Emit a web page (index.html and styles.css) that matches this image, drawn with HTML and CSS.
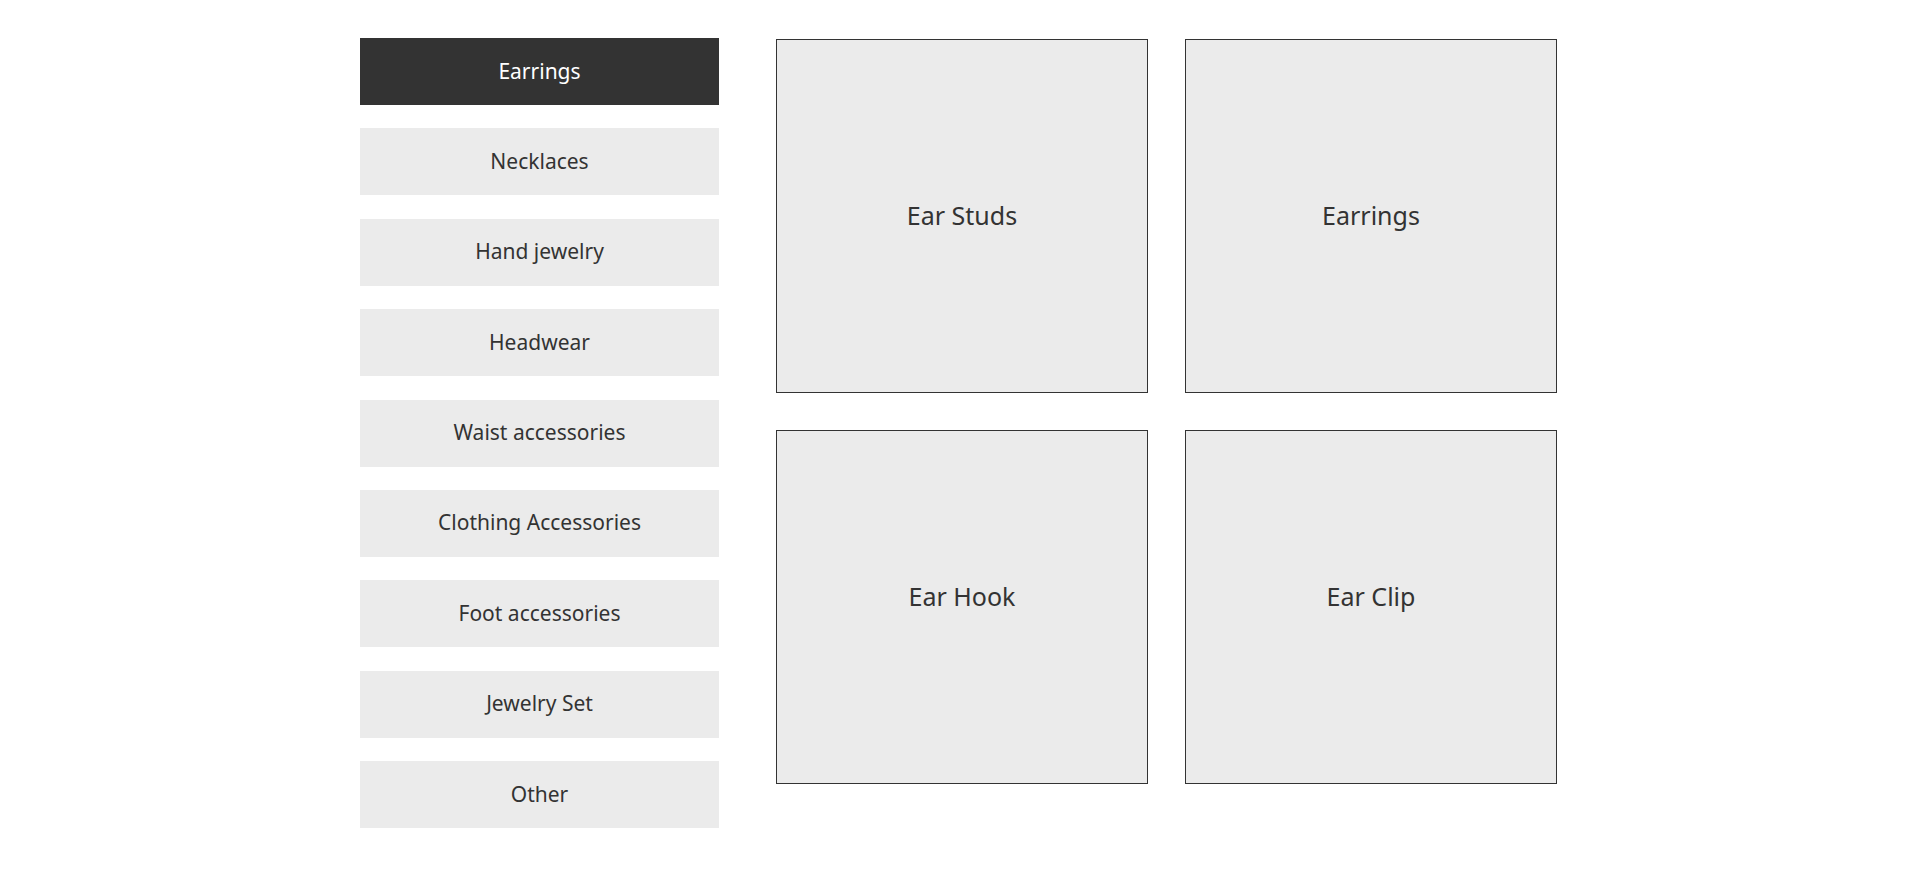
FILE: index.html
```html
<!DOCTYPE html>
<html>
<head>
<meta charset="utf-8">
<link rel="stylesheet" href="styles.css">
</head>
<body>
<div class="page">
  <div class="menu">
    <div class="item active">Earrings</div>
    <div class="item">Necklaces</div>
    <div class="item">Hand jewelry</div>
    <div class="item">Headwear</div>
    <div class="item">Waist accessories</div>
    <div class="item">Clothing Accessories</div>
    <div class="item">Foot accessories</div>
    <div class="item">Jewelry Set</div>
    <div class="item">Other</div>
  </div>
  <div class="grid">
    <div class="card">Ear Studs</div>
    <div class="card">Earrings</div>
    <div class="card card-low">Ear Hook</div>
    <div class="card card-low">Ear Clip</div>
  </div>
</div>
</body>
</html>
```
FILE: styles.css
```css
html, body {
  margin: 0;
  padding: 0;
  background: #ffffff;
}
body {
  font-family: "Noto Sans", "Open Sans", sans-serif;
  color: #333333;
}
.page {
  display: flex;
  align-items: flex-start;
  padding: 38px 0 0 360px;
  gap: 57px;
}
.menu {
  display: flex;
  flex-direction: column;
  gap: 23.4px;
  width: 359px;
}
.item {
  box-sizing: border-box;
  height: 67px;
  padding-bottom: 2px;
  background: #ebebeb;
  display: flex;
  align-items: center;
  justify-content: center;
  font-size: 21px;
  color: #333333;
}
.item.active {
  background: #333333;
  color: #ffffff;
}
.grid {
  display: grid;
  grid-template-columns: 372px 372px;
  grid-auto-rows: 354px;
  gap: 37px;
  margin-top: 1px;
}
.card {
  box-sizing: border-box;
  border: 1px solid #333333;
  background: #ebebeb;
  display: flex;
  align-items: center;
  justify-content: center;
  padding-bottom: 3px;
  font-size: 25px;
  color: #333333;
}
.card-low {
  padding-bottom: 22px;
}
```
